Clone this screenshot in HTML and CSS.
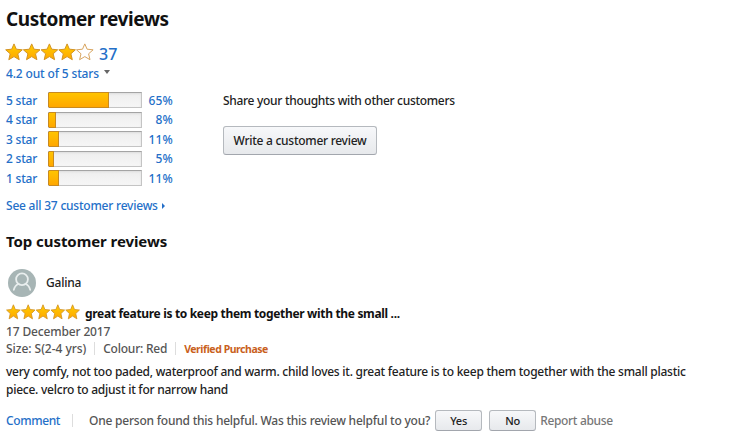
FILE: index.html
```html
<!DOCTYPE html>
<html lang="en">
<head>
<meta charset="utf-8">
<title>Customer reviews</title>
<link rel="stylesheet" href="styles.css">
</head>
<body>
<svg class="defs" width="0" height="0" aria-hidden="true">
  <defs>
    <linearGradient id="gold" x1="0" y1="0" x2="0" y2="1"><stop offset="0" stop-color="#ffce00"/><stop offset="1" stop-color="#ffa700"/></linearGradient>
    <path id="star" d="M9 .9 11.3 6.2 17.3 6.8 12.8 10.8 14.2 16.7 9 13.6 3.8 16.7 5.2 10.8 .7 6.8 6.7 6.2Z" stroke-linejoin="round"/>
  </defs>
</svg>
<main class="reviews">
  <h1 class="title"><span>Customer reviews</span></h1>
  <div class="rating">
    <svg class="stars" width="90" height="18" viewBox="0 0 90 18"><use class="full" href="#star"/><use class="full" href="#star" x="17.7"/><use class="full" href="#star" x="35.4"/><use class="full" href="#star" x="53.1"/><use class="empty" href="#star" x="70.8"/></svg>
    <a class="count"><span>37</span></a>
  </div>
  <a class="average"><span>4.2 out of 5 stars</span><i class="caret"></i></a>
  <section class="overview">
    <div class="histogram">
      <div class="bar-row"><span class="label">5 star</span><span class="track"><b class="fill" style="width:65%"></b></span><span class="percent">65%</span></div>
      <div class="bar-row"><span class="label">4 star</span><span class="track"><b class="fill" style="width:8%"></b></span><span class="percent">8%</span></div>
      <div class="bar-row"><span class="label">3 star</span><span class="track"><b class="fill" style="width:11%"></b></span><span class="percent">11%</span></div>
      <div class="bar-row"><span class="label">2 star</span><span class="track"><b class="fill" style="width:5%"></b></span><span class="percent">5%</span></div>
      <div class="bar-row"><span class="label">1 star</span><span class="track"><b class="fill" style="width:11%"></b></span><span class="percent">11%</span></div>
    </div>
    <div class="share">
      <p class="share-text"><span>Share your thoughts with other customers</span></p>
      <button class="button write"><span>Write a customer review</span></button>
    </div>
  </section>
  <a class="see-all"><span>See all 37 customer reviews</span><i class="arrow"></i></a>
  <h2 class="subtitle"><span>Top customer reviews</span></h2>
  <div class="author">
    <svg class="avatar" width="28" height="28" viewBox="0 0 28 28"><circle cx="14" cy="14" r="14" fill="#a7b5b5"/><g fill="none" stroke="#e9eeee" stroke-width="1.8" stroke-linecap="round"><circle cx="14" cy="10.3" r="5.9"/><path d="M5.8 20.8C6.6 17.8 8.4 15.6 10.5 15M22.2 20.8C21.4 17.8 19.6 15.6 17.5 15"/></g></svg>
    <span class="name">Galina</span>
  </div>
  <div class="headline">
    <svg class="stars-small" width="74" height="16" viewBox="0 0 90 18" preserveAspectRatio="none"><use class="full" href="#star"/><use class="full" href="#star" x="18"/><use class="full" href="#star" x="36"/><use class="full" href="#star" x="54"/><use class="full" href="#star" x="72"/></svg>
    <strong class="headline-text">great feature is to keep them together with the small ...</strong>
  </div>
  <div class="date"><span>17 December 2017</span></div>
  <div class="meta"><span class="size">Size: S(2-4 yrs)</span><i class="divider"></i><span class="colour">Colour: Red</span><i class="divider"></i><strong class="verified">Verified Purchase</strong></div>
  <p class="body"><span class="line-one">very comfy, not too paded, waterproof and warm. child loves it. great feature is to keep them together with the small plastic</span><br><span class="line-two">piece. velcro to adjust it for narrow hand</span></p>
  <div class="actions"><a class="comment">Comment</a><i class="divider"></i><span class="helpful">One person found this helpful. Was this review helpful to you?</span><button class="button vote">Yes</button><button class="button vote">No</button><span class="abuse">Report abuse</span></div>
</main>
</body>
</html>
```
FILE: styles.css
```css
* { box-sizing: border-box; }
body { margin: 0; background: #fff; color: #222; font: 500 12px/18px "Noto Sans", "Open Sans", sans-serif; white-space: nowrap; }
h1, h2, p { margin: 0; }
.defs { display: block; height: 0; }
.reviews { padding: 8px 6px 0; }
a, .bar-row { color: #246fc8; }
.title { font-size: 19px; line-height: 22px; font-weight: 700; color: #111; letter-spacing: -0.46px; }
.rating { display: flex; height: 20px; margin-top: 12px; align-items: center; }
.stars { margin-left: -1px; }
.full { fill: url(#gold); stroke: #d39424; stroke-width: 1; }
.empty { fill: #fff; stroke: #d8a560; stroke-width: 1; }
.count { font-size: 16px; margin: 3px 0 0 4px; }
.average { display: flex; align-items: center; height: 18px; margin-top: 3px; letter-spacing: -0.15px; }
.caret { margin: -5px 0 0 5px; border: 3px solid transparent; border-top: 4px solid #666; border-bottom: 0; }
.overview { display: flex; margin-top: 8px; }
.histogram { width: 168px; }
.bar-row { display: flex; align-items: center; height: 19.5px; }
.label { width: 42px; letter-spacing: -0.2px; }
.track { width: 94px; height: 16px; margin-top: -1px; background: linear-gradient(#eee, #f6f6f6); border: 1px solid #c4c4c4; border-top-color: #a4a4a4; box-shadow: inset 0 1px 2px #ddd; display: flex; }
.fill { background: linear-gradient(#ffc400, #ffa700); border-right: 1px solid #c88a20; box-shadow: -1px 0 #c88a20, 0 -1px #c88a20, 0 1px #c88a20; }
.percent { width: 31px; text-align: right; letter-spacing: 0.2px; }
.share { margin-left: 49px; }
.share-text { height: 20px; line-height: 20px; letter-spacing: -0.3px; }
.button { display: flex; align-items: center; justify-content: center; padding: 0; font: inherit; color: #222; background: linear-gradient(#f7f8fa, #e7e9ec); border: 1px solid #b5b9be; border-bottom-color: #a2a6ad; border-radius: 3px; }
.write { width: 154px; height: 29px; margin-top: 15px; letter-spacing: -0.27px; }
.see-all { display: flex; align-items: center; height: 18px; margin-top: 8px; letter-spacing: -0.22px; }
.arrow { margin-left: 4px; border: 3px solid transparent; border-left: 3px solid #246fc8; border-right: 0; }
.subtitle { font-size: 15px; line-height: 20px; margin-top: 16px; color: #111; letter-spacing: -0.07px; }
.author { display: flex; align-items: center; height: 28px; margin: 18px 0 0 2px; }
.name { margin-left: 10px; letter-spacing: -0.2px; }
.headline { display: flex; align-items: center; height: 18px; margin-top: 8px; color: #111; }
.stars-small { margin-top: -3px; }
.headline-text { margin-left: 5px; letter-spacing: -0.33px; }
.date, .meta { height: 18px; color: #555; }
.date { letter-spacing: -0.15px; }
.meta { display: flex; align-items: center; margin-top: -1px; }
.size { letter-spacing: -0.04px; }
.colour { letter-spacing: -0.23px; }
.divider { width: 1px; height: 13px; background: #ddd; margin: 0 8px; }
.verified { font-size: 10.5px; color: #c9601c; letter-spacing: -0.45px; }
.body { margin-top: 5px; letter-spacing: -0.245px; }
.actions { display: flex; align-items: center; height: 22px; margin-top: 11px; color: #555; }
.actions .divider { margin: 0 16px 0 12px; }
.comment { letter-spacing: -0.38px; }
.helpful { letter-spacing: -0.22px; }
.vote { width: 47px; height: 21px; font-size: 11px; margin-left: 5px; letter-spacing: -0.2px; }
.vote + .vote { margin-left: 7px; }
.abuse { margin-left: 4px; color: #777; letter-spacing: -0.33px; }
```
